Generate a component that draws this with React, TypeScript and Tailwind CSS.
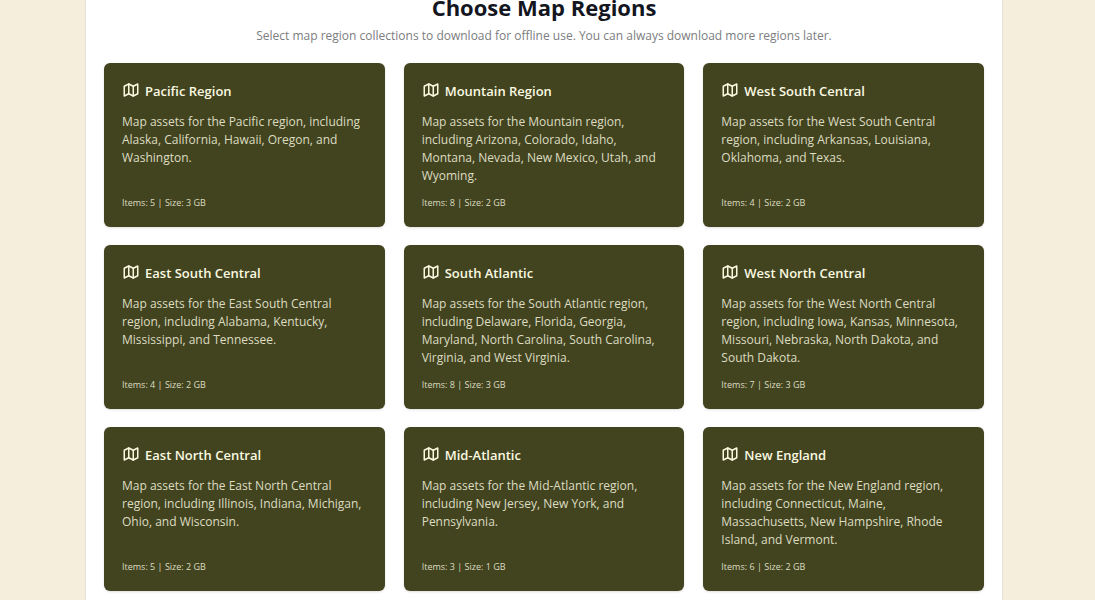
import { TbMap } from "react-icons/tb";

type Region = {
  name: string;
  description: string;
  items: number;
  size: string;
};

const REGIONS: Region[] = [
  {
    name: "Pacific Region",
    description:
      "Map assets for the Pacific region, including Alaska, California, Hawaii, Oregon, and Washington.",
    items: 5,
    size: "3 GB",
  },
  {
    name: "Mountain Region",
    description:
      "Map assets for the Mountain region, including Arizona, Colorado, Idaho, Montana, Nevada, New Mexico, Utah, and Wyoming.",
    items: 8,
    size: "2 GB",
  },
  {
    name: "West South Central",
    description:
      "Map assets for the West South Central region, including Arkansas, Louisiana, Oklahoma, and Texas.",
    items: 4,
    size: "2 GB",
  },
  {
    name: "East South Central",
    description:
      "Map assets for the East South Central region, including Alabama, Kentucky, Mississippi, and Tennessee.",
    items: 4,
    size: "2 GB",
  },
  {
    name: "South Atlantic",
    description:
      "Map assets for the South Atlantic region, including Delaware, Florida, Georgia, Maryland, North Carolina, South Carolina, Virginia, and West Virginia.",
    items: 8,
    size: "3 GB",
  },
  {
    name: "West North Central",
    description:
      "Map assets for the West North Central region, including Iowa, Kansas, Minnesota, Missouri, Nebraska, North Dakota, and South Dakota.",
    items: 7,
    size: "3 GB",
  },
  {
    name: "East North Central",
    description:
      "Map assets for the East North Central region, including Illinois, Indiana, Michigan, Ohio, and Wisconsin.",
    items: 5,
    size: "2 GB",
  },
  {
    name: "Mid-Atlantic",
    description:
      "Map assets for the Mid-Atlantic region, including New Jersey, New York, and Pennsylvania.",
    items: 3,
    size: "1 GB",
  },
  {
    name: "New England",
    description:
      "Map assets for the New England region, including Connecticut, Maine, Massachusetts, New Hampshire, Rhode Island, and Vermont.",
    items: 6,
    size: "2 GB",
  },
];

const RegionCard = ({ region }: { region: Region }) => (
  <article className="flex flex-col rounded-md bg-[#424420] p-[18px] text-[#fbf9e0] shadow-sm">
    <div className="flex items-start">
      <TbMap className="mr-[5px] size-[18px]" />
      <h3 className="text-[13px] leading-5 font-semibold">{region.name}</h3>
    </div>
    <p className="mt-3 min-h-[72px] text-[12px] leading-[18px] text-[#dddcc0]">
      {region.description}
    </p>
    <p className="mt-3 text-[9px] leading-3 text-[#dddcc0]">
      Items: {region.items} | Size: {region.size}
    </p>
  </article>
);

const App = () => {
  return (
    <div className="min-h-screen bg-[#f5eedc] pr-[92px] pl-[85px] font-['Open_Sans',sans-serif]">
      <main className="border-x border-[#e6e0d6] bg-white px-[18px] pb-5">
        <header className="text-center">
          <h1 className="text-[22px] leading-[14px] font-bold text-[#14161f]">
            Choose Map Regions
          </h1>
          <p className="mt-3.5 text-[12px] leading-4 text-[#7b7d80]">
            Select map region collections to download for offline use. You can
            always download more regions later.
          </p>
        </header>
        <section className="mt-[19px] grid grid-cols-3 gap-x-[19px] gap-y-[18px]">
          {REGIONS.map((region) => (
            <RegionCard key={region.name} region={region} />
          ))}
        </section>
      </main>
    </div>
  );
};

export default App;
